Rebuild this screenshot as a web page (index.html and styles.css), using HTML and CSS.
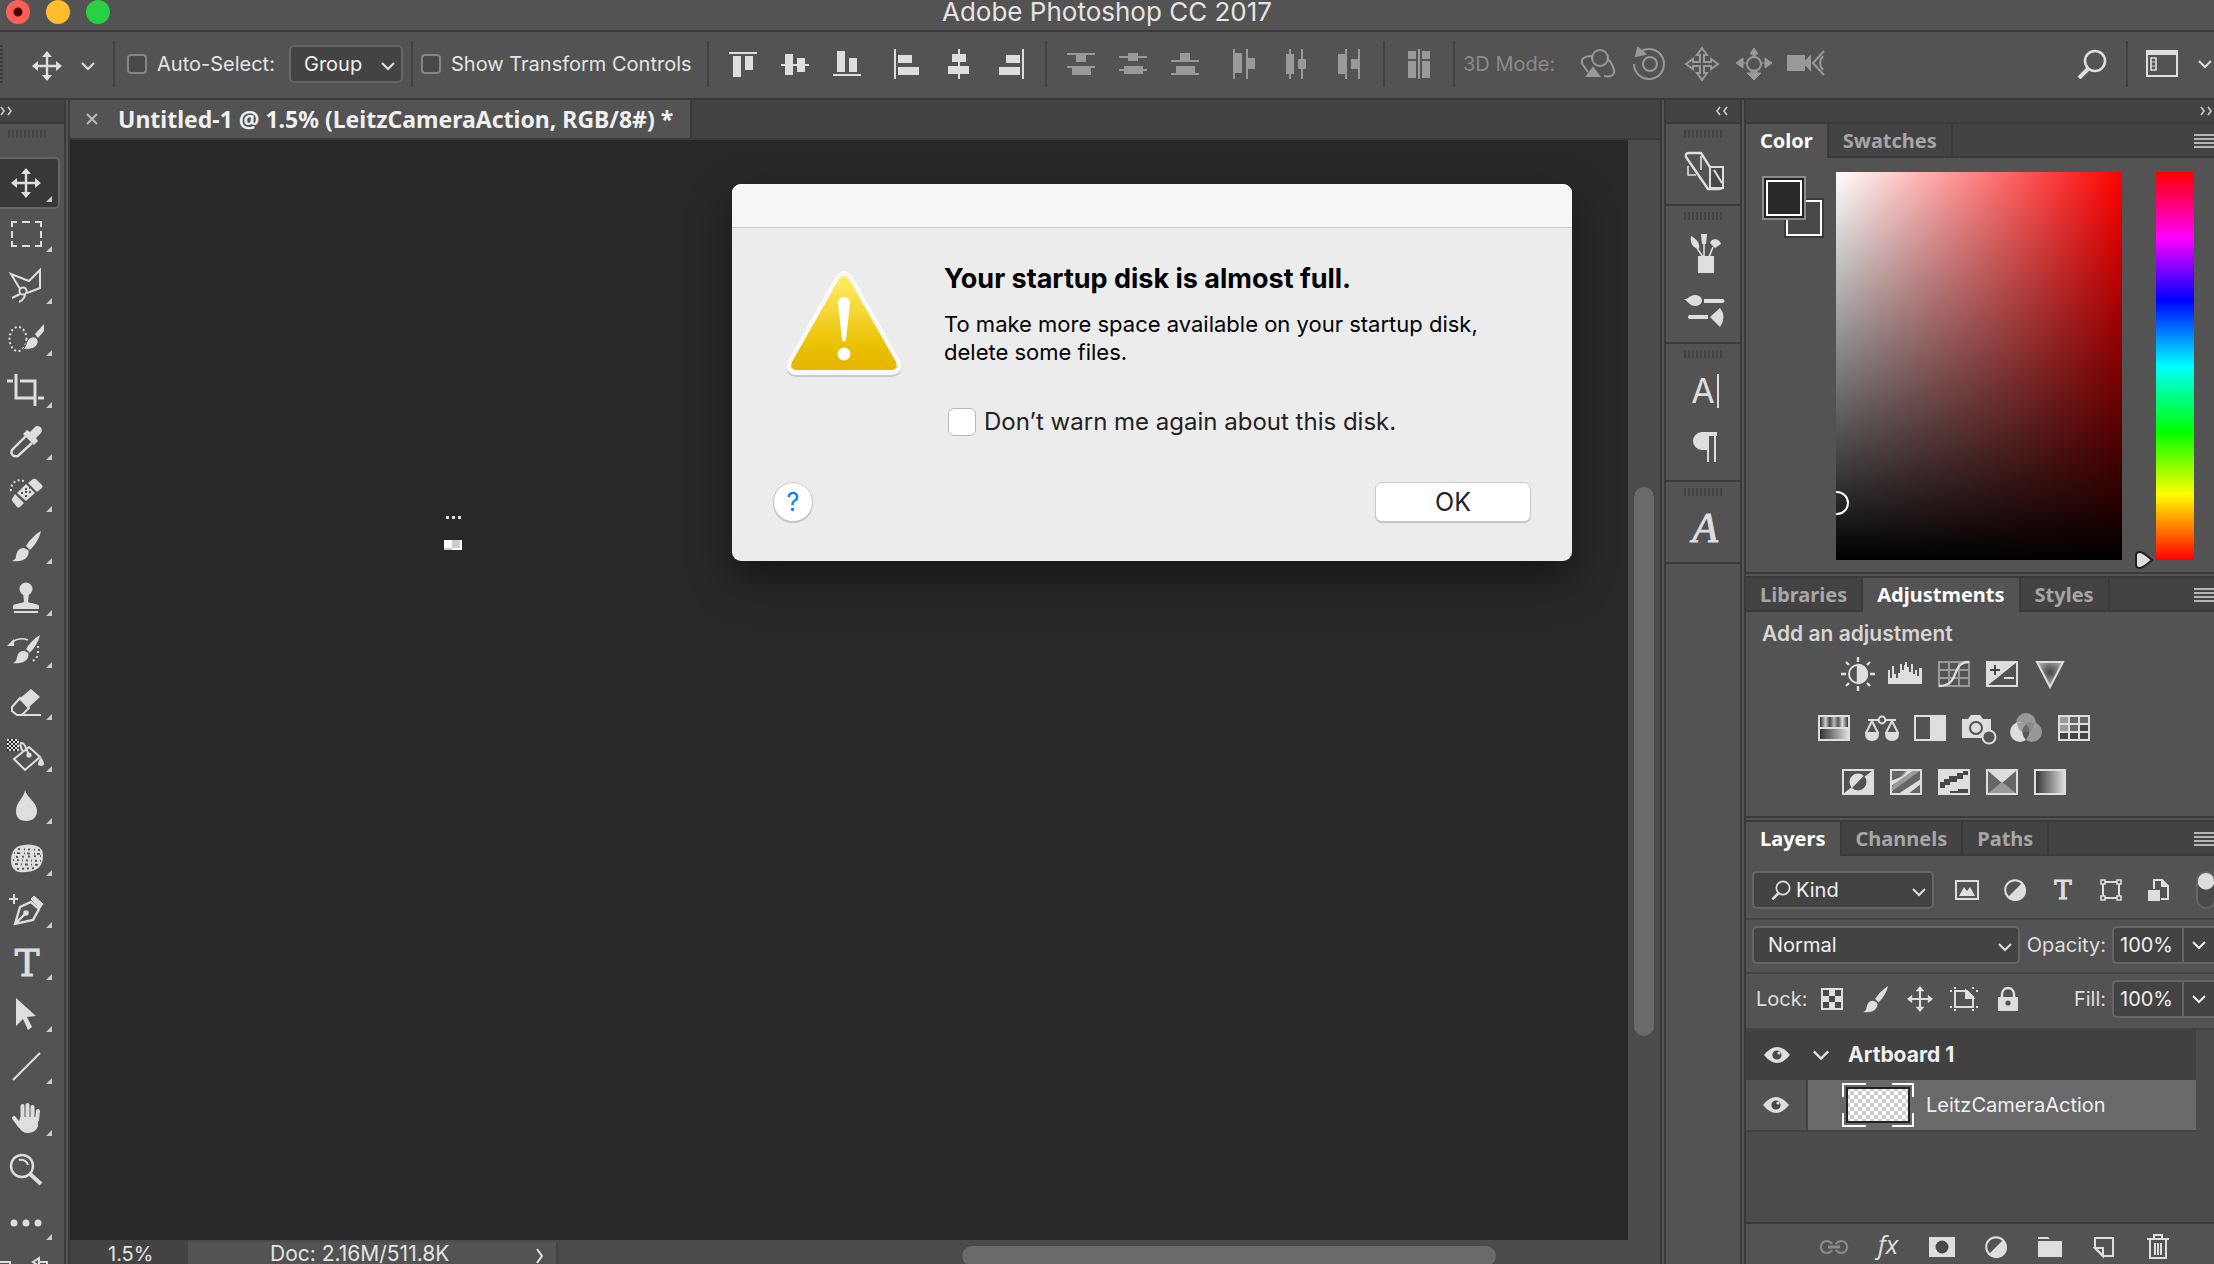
FILE: index.html
```html
<!DOCTYPE html>
<html lang="en">
  <head>
    <meta charset="UTF-8">
    <meta name="viewport" content="width=device-width, initial-scale=1.0">
    <title>Adobe Photoshop CC 2017</title>
    <link rel="stylesheet" href="styles.css">
  </head>
  <body>
    <!-- shared icons -->
    <svg class="sprite" aria-hidden="true">
      <symbol id="move" viewBox="0 0 30 30"><path d="M15 4v22M4 15h22" stroke="currentColor" stroke-width="2.4"/><path d="M15 0l5 6H10zM15 30l5-6H10zM0 15l6-5v10zM30 15l-6-5v10z" fill="currentColor"/></symbol>
      <symbol id="chevron" viewBox="0 0 14 10"><path d="M1 2l6 6 6-6" fill="none" stroke="currentColor" stroke-width="2"/></symbol>
      <symbol id="brush" viewBox="0 0 30 32"><path d="M29 1c-7 4-12 10-15 15l4 4C23 15 27 9 29 1z" fill="currentColor"/><path d="M12 18c-6 0-7 4-8 8 0 3-2 4-4 5 6 1 12 0 15-4 2-3 2-6 1-7z" fill="currentColor"/></symbol>
      <symbol id="search" viewBox="0 0 30 30"><circle cx="18" cy="12" r="10" fill="none" stroke="currentColor" stroke-width="2.6"/><path d="M11 20l-9 9" stroke="currentColor" stroke-width="4"/></symbol>
      <symbol id="eye" viewBox="0 0 26 16"><path d="M0 8Q13-8 26 8 13 24 0 8z" fill="currentColor"/><circle cx="13" cy="8" r="4.6" fill="#484848"/><circle cx="15" cy="6" r="1.6" fill="currentColor"/></symbol>
      <symbol id="halfcircle" viewBox="0 0 22 22"><circle cx="11" cy="11" r="9.8" fill="none" stroke="currentColor" stroke-width="2"/><path d="M18 4A10 10 0 1 1 4 18z" fill="currentColor"/></symbol>
      <symbol id="menu" viewBox="0 0 20 14"><path d="M0 1h20M0 5h20M0 9h20M0 13h20" stroke="currentColor" stroke-width="2"/></symbol>
    </svg>

    <header class="titlebar">
      <div class="lights">
        <button class="light red" aria-label="Close"></button>
        <button class="light yellow" aria-label="Minimize"></button>
        <button class="light green" aria-label="Zoom"></button>
      </div>
      <h1>Adobe Photoshop CC 2017</h1>
    </header>

    <div class="options">
      <span class="edge-grip"></span>
      <button class="opt wide" aria-label="Move tool"><svg width="30" height="30"><use href="#move"/></svg></button>
      <button class="opt small" aria-label="Tool presets"><svg width="14" height="10"><use href="#chevron"/></svg></button>
      <span class="sep"></span>
      <label class="check auto"><input type="checkbox"> Auto-Select:</label>
      <div class="select group">
        <select aria-label="Auto-select target"><option>Group</option></select>
        <svg width="14" height="10"><use href="#chevron"/></svg>
      </div>
      <span class="sep"></span>
      <label class="check transform"><input type="checkbox"> Show Transform Controls</label>
      <span class="sep"></span>
      <div class="opt-group">
        <button class="opt" aria-label="Align top edges"><svg width="30" height="30" fill="currentColor"><path d="M1 3h28v2H1zM5 7h8v21H5zM17 7h8v14h-8z"/></svg></button>
        <button class="opt" aria-label="Align vertical centers"><svg width="30" height="30" fill="currentColor"><path d="M1 15h28v2H1zM5 5h8v21H5zM17 9h8v14h-8z"/></svg></button>
        <button class="opt" aria-label="Align bottom edges"><svg width="30" height="30" fill="currentColor"><path d="M1 25h28v2H1zM5 2h8v21H5zM17 9h8v14h-8z"/></svg></button>
      </div>
      <div class="opt-group">
        <button class="opt" aria-label="Align left edges"><svg width="30" height="30" fill="currentColor"><path d="M2 0h2v30H2zM6 6h14v8H6zM6 18h21v8H6z"/></svg></button>
        <button class="opt" aria-label="Align horizontal centers"><svg width="30" height="30" fill="currentColor"><path d="M14 0h2v30h-2zM8 5h14v8H8zM4 17h21v8H4z"/></svg></button>
        <button class="opt" aria-label="Align right edges"><svg width="30" height="30" fill="currentColor"><path d="M26 0h2v30h-2zM10 6h14v8H10zM3 18h21v8H3z"/></svg></button>
      </div>
      <span class="sep"></span>
      <div class="opt-group off">
        <button class="opt" disabled aria-label="Distribute top edges"><svg width="30" height="30" fill="currentColor"><path d="M1 4h28v2H1zM10 6h10v7H10zM1 17h28v2H1zM6 19h19v7H6z"/></svg></button>
        <button class="opt" disabled aria-label="Distribute vertical centers"><svg width="30" height="30" fill="currentColor"><path d="M1 7h28v2H1zM10 4h10v8H10zM1 20h28v2H1zM6 17h19v8H6z"/></svg></button>
        <button class="opt" disabled aria-label="Distribute bottom edges"><svg width="30" height="30" fill="currentColor"><path d="M1 11h28v2H1zM10 4h10v7H10zM1 24h28v2H1zM6 17h19v7H6z"/></svg></button>
      </div>
      <div class="opt-group off">
        <button class="opt" disabled aria-label="Distribute left edges"><svg width="30" height="30" fill="currentColor"><path d="M3 0h2v30H3zM5 4h7v20H5zM16 0h2v30h-2zM18 9h7v11h-7z"/></svg></button>
        <button class="opt" disabled aria-label="Distribute horizontal centers"><svg width="30" height="30" fill="currentColor"><path d="M7 0h2v30H7zM4 5h8v20H4zM19 0h2v30h-2zM16 10h8v10h-8z"/></svg></button>
        <button class="opt" disabled aria-label="Distribute right edges"><svg width="30" height="30" fill="currentColor"><path d="M11 0h2v30h-2zM4 5h7v20H4zM24 0h2v30h-2zM17 10h7v10h-7z"/></svg></button>
      </div>
      <span class="sep"></span>
      <div class="opt-group off">
        <button class="opt" disabled aria-label="Auto-align layers"><svg width="30" height="30" fill="currentColor"><path d="M14 0h2v30h-2zM4 2h8v8H4zM4 12h8v17H4zM18 2h8v8h-8zM18 12h8v17h-8z"/></svg></button>
      </div>
      <span class="sep"></span>
      <span class="mode">3D Mode:</span>
      <div class="opt-group off">
        <button class="opt" disabled aria-label="Orbit"><svg width="36" height="32" fill="none" stroke="currentColor" stroke-width="2"><circle cx="20" cy="10" r="8"/><path d="M12 8C3 8 0 12 3 17l5 7M27 10c5 5 8 12 7 15-1 3-5 4-10 3"/><path d="M7 28l6-8 6 8z" fill="currentColor"/></svg></button>
        <button class="opt" disabled aria-label="Roll"><svg width="36" height="34" fill="none" stroke="currentColor" stroke-width="2"><circle cx="18" cy="17" r="7"/><path d="M8 5a15 15 0 1 1-6 12"/><path d="M4 9l2-8 7 6z" fill="currentColor"/></svg></button>
        <button class="opt" disabled aria-label="Pan"><svg width="34" height="34" fill="none" stroke="currentColor" stroke-width="2"><path d="M17 1l5 7h-3v7h7v-3l7 5-7 5v-3h-7v7h3l-5 7-5-7h3v-7H8v3l-7-5 7-5v3h7V8h-3z"/></svg></button>
        <button class="opt" disabled aria-label="Slide"><svg width="36" height="34" fill="none" stroke="currentColor" stroke-width="2"><circle cx="18" cy="17" r="7"/><path d="M18 1l4 6h-3v3h-2V7h-3zM0 16l7-5v10zM36 16l-7-5v10zM18 33l7-7h-4v-3h-6v3h-4zM7 16h4M25 16h4" fill="currentColor" stroke-width="1"/></svg></button>
        <button class="opt" disabled aria-label="Camera"><svg width="38" height="28" fill="none" stroke="currentColor" stroke-width="2"><path d="M1 6h16v14H1zM17 13l6-6v12z" fill="currentColor"/><path d="M37 1L26 13l11 12M36 6q-6 7 0 14"/></svg></button>
      </div>
      <span class="spacer"></span>
      <button class="opt" aria-label="Search"><svg width="30" height="30"><use href="#search"/></svg></button>
      <span class="sep"></span>
      <button class="opt" aria-label="Workspace"><svg width="32" height="28"><path d="M1 1h30v25H1z" fill="none" stroke="currentColor" stroke-width="2"/><path d="M1 1h30v4H1z" fill="currentColor"/><path d="M5 8h5v12H5z" fill="none" stroke="currentColor" stroke-width="1.6"/><path d="M5 12h5M5 16h5" stroke="currentColor"/></svg></button>
      <button class="opt tiny" aria-label="Workspace menu"><svg width="14" height="10"><use href="#chevron"/></svg></button>
    </div>

    <main class="workspace">
      <nav class="toolbar" aria-label="Tools">
        <div class="strip left"><svg width="13" height="10" fill="none" stroke="#ccc" stroke-width="1.6"><path d="M1 1l3 4-3 4M8 1l3 4-3 4"/></svg></div>
        <div class="grip"></div>
        <button class="tool active" aria-label="Move"><svg width="52" height="52"><use href="#move" x="11" y="11" width="30" height="30"/></svg></button>
        <button class="tool" aria-label="Marquee"><svg width="52" height="52" fill="none" stroke="currentColor" stroke-width="2"><path d="M12 18v-5h5M22 13h8M35 13h6v5M41 22v7M41 32v5h-6M30 37h-8M17 37h-5v-5M12 29v-7"/></svg></button>
        <button class="tool" aria-label="Lasso"><svg width="52" height="52" fill="none" stroke="currentColor" stroke-width="2"><path d="M20 28L11 13l18 7 11-11v18l-13 5M12 37l8-4M19 41c4-2 6-4 6-8"/><circle cx="23" cy="30" r="3.6"/></svg></button>
        <button class="tool" aria-label="Quick selection"><svg width="52" height="52"><ellipse cx="18" cy="26" rx="8.5" ry="12" fill="none" stroke="currentColor" stroke-width="2" stroke-dasharray="2 2.5"/><path d="M23 36c4-2 2-10 9-12 3-1 7 2 6 6-2 6-9 7-15 6z" fill="#dedede" stroke="#535353" stroke-width="1"/><path d="M35 21l9-10v7l-6 7z" fill="currentColor"/></svg></button>
        <button class="tool" aria-label="Crop"><svg width="52" height="52" fill="none" stroke="currentColor" stroke-width="3"><path d="M7 16h6M16 9v24h19M20 16h15v25M38 33h6"/></svg></button>
        <button class="tool" aria-label="Eyedropper"><svg width="52" height="52"><path d="M26 19L12 33c-2 5 2 7 6 6l14-13" fill="none" stroke="currentColor" stroke-width="2.4"/><path d="M23 17l4-4 3 2 5-5c4-3 9 2 6 6l-5 5 2 3-4 4z" fill="currentColor"/></svg></button>
        <button class="tool" aria-label="Healing brush"><svg width="52" height="52"><path d="M24 12c-8-3-14 3-13 11" fill="none" stroke="currentColor" stroke-width="2" stroke-dasharray="2 2.5"/><path d="M33 10q2-1 4 1l5 5q1 2 0 3l-5 4-9-9zM26 15l9 9-9 8-9-8zM15 25l9 9-4 4q-2 1-3 0l-4-5q-2-2-1-3z" fill="currentColor"/><path d="M21 24h2M25 20h2M25 27h2M29 23h2M25 23h2M29 19h1" stroke="#535353" stroke-width="2"/></svg></button>
        <button class="tool" aria-label="Brush"><svg width="52" height="52"><use href="#brush" x="12" y="9" width="30" height="32"/></svg></button>
        <button class="tool" aria-label="Clone stamp"><svg width="52" height="52" fill="currentColor"><circle cx="26" cy="16" r="6.5"/><path d="M23 20h6l-1 9c3 2 10 1 11 4v3H13v-3c1-3 8-2 11-4zM14 38h24v2H14z"/></svg></button>
        <button class="tool" aria-label="History brush"><svg width="52" height="52"><use href="#brush" x="13" y="9" width="28" height="30"/><path d="M7 21l7-7v7z" fill="currentColor"/><path d="M12 17c6-4 11-4 16-2" fill="none" stroke="currentColor" stroke-width="1.6"/><path d="M38 21v8c-1 4-3 6-7 8" fill="none" stroke="currentColor" stroke-width="2" stroke-dasharray="2 3"/></svg></button>
        <button class="tool" aria-label="Eraser"><svg width="52" height="52"><path d="M31 12l9 8-12 11-9-9z" fill="currentColor"/><path d="M20 21l-8 9v4l5 4h5l7-7zM17 38h24" fill="none" stroke="currentColor" stroke-width="2"/></svg></button>
        <button class="tool" aria-label="Paint bucket"><svg width="52" height="52" fill="none" stroke="currentColor" stroke-width="2"><path d="M14 30l15-12 11 10-15 13zM29 26c-2-4-4-12-7-12s-1 5 1 9"/><path d="M7 10h10v12H7z" fill="#222" stroke="none"/><path d="M7 11h10M9 13h10M7 15h10M9 17h10M7 19h10M9 21h10" stroke-dasharray="2 2"/><path d="M41 28q6 9 0 9t0-9z" fill="currentColor" stroke="none"/><circle cx="29" cy="26" r="1.6" fill="currentColor"/></svg></button>
        <button class="tool" aria-label="Blur"><svg width="52" height="52" fill="currentColor"><path d="M25 9c2 8 12 12 12 21 0 6-4 10-11 10s-10-4-10-10c0-9 8-13 9-21z"/></svg></button>
        <button class="tool" aria-label="Sponge"><svg width="52" height="52"><path d="M19 13q10-3 18 0 6 2 6 10 0 9-6 13-8 4-18 3-8-2-8-11 0-12 8-15z" fill="currentColor"/><g fill="none" stroke="#535353" stroke-width="1.8"><path d="M18 16l22 1" stroke-dasharray="2 4 1 3"/><path d="M14 20l28 1" stroke-dasharray="1 2 3 4"/><path d="M16 24l25-1" stroke-dasharray="2 4"/><path d="M13 27l29 1" stroke-dasharray="1 3 2 3"/><path d="M15 31l26 1" stroke-dasharray="3 3 1 3"/><path d="M17 36l20-1" stroke-dasharray="2 3"/></g></svg></button>
        <button class="tool" aria-label="Pen"><svg width="52" height="52" fill="none" stroke="currentColor" stroke-width="2.4"><path d="M9 14h9M14 9v10" stroke-width="2"/><path d="M15 39l5-17 11-5 8 7-6 11zM15 39l10-10"/><path d="M31 14l3-3 9 8-3 4z" fill="currentColor" stroke-width="1"/><circle cx="26" cy="28" r="1.6" fill="currentColor"/></svg></button>
        <button class="tool" aria-label="Type"><svg width="52" height="52"><text class="slab" x="27" y="39" font-size="37">T</text></svg></button>
        <button class="tool" aria-label="Path selection"><svg width="52" height="52" fill="currentColor"><path d="M16 9l20 18-9 1 5 10-4 3-5-11-7 7z"/></svg></button>
        <button class="tool" aria-label="Line"><svg width="52" height="52"><path d="M13 39l27-27" stroke="currentColor" stroke-width="2.2"/></svg></button>
        <button class="tool" aria-label="Hand"><svg width="52" height="52" fill="none" stroke="currentColor" stroke-width="4" stroke-linecap="round"><path d="M22.500 26V13M27.500 26V12M32.500 26V14M37 27l1-9M14 25l6 8"/><path d="M21 25h16v8q-2 6-9 6-6 0-9-7z" fill="currentColor" stroke-width="2"/></svg></button>
        <button class="tool plain" aria-label="Zoom"><svg width="52" height="52" fill="none" stroke="currentColor" stroke-width="2.4"><circle cx="22" cy="21" r="11"/><path d="M19 15c4-1 8 1 9 5" stroke-width="2"/><path d="M30 29l11 10" stroke-width="4"/></svg></button>
        <button class="tool" aria-label="Edit toolbar"><svg width="52" height="52" fill="currentColor"><circle cx="14" cy="26" r="3.500"/><circle cx="26" cy="26" r="3.500"/><circle cx="38" cy="26" r="3.500"/></svg></button>
        <svg class="swap" width="52" height="24" fill="none" stroke="#dedede" stroke-width="2"><path d="M-2 13h12v12h-12z"/><path d="M33 13l6-4v8zM38 13h9v8" /></svg>
      </nav>

      <section class="document">
        <div class="doc-tabs">
          <div class="doc-tab">
            <button class="close" aria-label="Close document"><svg width="12" height="12"><path d="M1 1l10 10M11 1L1 11" stroke="#bbb" stroke-width="2"/></svg></button>
            <span>Untitled-1 @ 1.5% (LeitzCameraAction, RGB/8#) *</span>
          </div>
        </div>
        <div class="view">
          <div class="canvas">
            <svg class="artboard" width="20" height="36"><path d="M2 2.500h3M8 2.500h3M14 2.500h3" stroke="#ddd" stroke-width="3"/><path d="M0 25h18v10H0z" fill="#fff"/><path d="M8 25h8v8H8zM0 33h8v2H0z" fill="#ccc"/></svg>
          </div>
          <div class="vscroll"><div class="vthumb"></div></div>
        </div>
        <div class="statusbar">
          <span class="zoom">1.5%</span>
          <div class="docsize"><span>Doc: 2.16M/511.8K</span><svg width="8" height="16" fill="none" stroke="currentColor" stroke-width="2"><path d="M1 1l5 7-5 7"/></svg></div>
          <div class="hscroll"><div class="hthumb"></div></div>
        </div>
      </section>

      <aside class="dock">
        <div class="strip center"><svg width="14" height="10" fill="none" stroke="#ccc" stroke-width="1.6"><path d="M5 1L2 5l3 4M12 1L9 5l3 4"/></svg></div>
        <div class="dock-group">
          <div class="grip"></div>
          <button aria-label="History"><svg width="44" height="44" fill="none" stroke="currentColor" stroke-width="2"><path d="M4 17v9h8M17 7v14" stroke-width="1.6"/><path d="M5 4h12l21 33q1 3-3 3H24L2 8q-1-4 3-4z" stroke-width="2.4"/><path d="M26 18h13v21H26z" fill="#484848"/><path d="M30 21l8 13"/></svg></button>
        </div>
        <div class="dock-group two">
          <div class="grip"></div>
          <button aria-label="Brush presets"><svg width="44" height="44" fill="currentColor"><path d="M14 25h16v17H14zM17 3h6l-1 10h-4zM7 5c7 4 9 8 8 13-6-1-9-5-8-13zM26 12c2-6 10-4 11 1l-6 4z"/><path d="M13 17l6 9M20 12v14M29 16l-4 10" stroke="currentColor" stroke-width="1.6"/></svg></button>
          <button aria-label="Brushes"><svg width="44" height="44" fill="currentColor"><path d="M0 12c4 1 6-5 12-4 8 1 8 10 0 11-7 0-8-5-12-7zM20 12h19q3 2 0 4H20zM5 28h19v4H5q-2-2 0-4zM26 30l10-9q7 9 0 19z"/></svg></button>
        </div>
        <div class="dock-group two">
          <div class="grip"></div>
          <button aria-label="Character"><svg width="44" height="44"><text class="sans" x="19" y="34" font-size="34">A</text><path d="M34 5v34" stroke="currentColor" stroke-width="2"/></svg></button>
          <button aria-label="Paragraph"><svg width="44" height="44"><path d="M18 8h14v2H18zM18 8a8 8 0 0 0 0 16h6V8zM24 8v29M31 8v29" fill="currentColor" stroke="currentColor" stroke-width="2"/></svg></button>
        </div>
        <div class="dock-group">
          <div class="grip"></div>
          <button aria-label="Glyphs"><svg width="44" height="44"><text class="italic" x="21" y="35" font-size="42">A</text></svg></button>
        </div>
      </aside>

      <aside class="panels">
        <div class="strip right"><svg width="14" height="10" fill="none" stroke="#ccc" stroke-width="1.6"><path d="M1 1l3 4-3 4M8 1l3 4-3 4"/></svg></div>

        <section class="panel">
          <div class="tabs">
            <button class="tab active">Color</button>
            <button class="tab">Swatches</button>
            <button class="menu" aria-label="Color menu"><svg width="20" height="14"><use href="#menu"/></svg></button>
          </div>
          <div class="color">
            <svg class="swatches" width="64" height="64" fill="none"><path d="M22 22h40v40H22z" fill="#3a3a3a"/><path d="M25 25h34v34H25z" fill="#484848" stroke="#fff" stroke-width="2"/><path d="M0 0h44v44H0z" fill="#8c8c8c"/><path d="M2 2h40v40H2z" fill="#222"/><path d="M5 5h34v34H5z" fill="#282828" stroke="#fff" stroke-width="2"/></svg>
            <div class="field"><span class="picker"></span></div>
            <input class="hue" type="range" min="0" max="360" value="0" aria-label="Hue">
          </div>
        </section>

        <section class="panel">
          <div class="tabs">
            <button class="tab">Libraries</button>
            <button class="tab active">Adjustments</button>
            <button class="tab">Styles</button>
            <button class="menu" aria-label="Adjustments menu"><svg width="20" height="14"><use href="#menu"/></svg></button>
          </div>
          <div class="adjustments">
            <h2>Add an adjustment</h2>
            <div class="adj-row">
              <button aria-label="Brightness/Contrast"><svg width="36" height="36" fill="none" stroke="currentColor" stroke-width="2.4"><circle cx="18" cy="18" r="9" stroke-width="2"/><path d="M18 9a9 9 0 0 1 0 18z" fill="currentColor"/><path d="M18 1v5M18 30v5M1 18h5M30 18h5M6 6l3 3M27 27l3 3M30 6l-3 3M9 27l-3 3"/></svg></button>
              <button aria-label="Levels"><svg width="36" height="36" fill="currentColor"><path d="M0 28V14h2v8h2V10h2v8h2v4h2v-5h2V8h2v6h2V9h1V6h2v5h2v5h2V8h2v10h2v-4h2v6h2v-8h3v16z"/></svg></button>
              <button aria-label="Curves"><svg width="36" height="36" fill="none"><path d="M3 6h30v24H3zM13 6v24M23 6v24M3 14h30M3 22h30" stroke="#999" stroke-width="2"/><path d="M3 30c22 0 11-24 30-24" stroke="currentColor" stroke-width="2.4"/></svg></button>
              <button aria-label="Exposure"><svg width="36" height="36"><path d="M3 6h30v24H3z" fill="#535353" stroke="currentColor" stroke-width="2"/><path d="M3 30V6h30z" fill="currentColor"/><path d="M6 14h10M11 9v10" stroke="#444" stroke-width="2"/><path d="M20 22h10" stroke="currentColor" stroke-width="2"/></svg></button>
              <button aria-label="Vibrance"><svg width="36" height="36"><defs><radialGradient id="vib" cy=".4" r=".45"><stop offset="0" stop-color="#444"/><stop offset="1" stop-color="#999"/></radialGradient></defs><path d="M5 6h26L18 31z" fill="url(#vib)" stroke="currentColor" stroke-width="2"/></svg></button>
            </div>
            <div class="adj-row">
              <button aria-label="Hue/Saturation"><svg width="36" height="36"><defs><linearGradient id="gr"><stop offset="0" stop-color="#333"/><stop offset="1" stop-color="#ddd"/></linearGradient><linearGradient id="bars"><stop offset="0" stop-color="#333"/><stop offset=".2" stop-color="#ccc"/><stop offset=".35" stop-color="#444"/><stop offset=".5" stop-color="#bbb"/><stop offset=".65" stop-color="#555"/><stop offset=".8" stop-color="#ddd"/><stop offset="1" stop-color="#333"/></linearGradient></defs><path d="M2 5h32v26H2z" fill="currentColor"/><path d="M4 7h28v10H4z" fill="url(#bars)"/><path d="M4 19h28v10H4z" fill="url(#gr)"/></svg></button>
              <button aria-label="Color balance"><svg width="36" height="36" fill="none" stroke="currentColor" stroke-width="2"><path d="M4 10h28M8 11L2 23M8 11l6 12M28 11l-6 12M28 11l6 12" /><circle cx="18" cy="10" r="3.400" fill="#535353"/><path d="M2 23h12q0 7-6 7t-6-7zM22 23h12q0 7-6 7t-6-7z" fill="currentColor"/></svg></button>
              <button aria-label="Black and white"><svg width="36" height="36"><path d="M3 6h30v24H3z" fill="none" stroke="currentColor" stroke-width="2"/><path d="M18 6h15v24H18z" fill="currentColor"/></svg></button>
              <button aria-label="Photo filter"><svg width="36" height="36"><path d="M2 9h6l3-4h9l3 4h8v19H2z" fill="currentColor"/><circle cx="16" cy="18" r="6" fill="currentColor" stroke="#535353" stroke-width="2"/><circle cx="29" cy="27" r="6.500" fill="#535353" stroke="currentColor" stroke-width="2"/></svg></button>
              <button aria-label="Channel mixer"><svg width="36" height="36"><circle cx="18" cy="13" r="10" fill="#999"/><circle cx="12" cy="22" r="10" fill="#dedede"/><circle cx="24" cy="22" r="10" fill="#aaa" fill-opacity=".8"/><path d="M18 14q7 7 0 16-7-9 0-16z" fill="#555"/><path d="M9 13q9-2 9 2 0-4 9-2-1 7-5 9h-8q-4-2-5-9z" fill="#777" opacity=".6"/></svg></button>
              <button aria-label="Color lookup"><svg width="36" height="36"><path d="M2 5h32v26H2z" fill="currentColor"/><path d="M4 7h8v6H4zM4 15h8v6H4z" fill="#999"/><path d="M14 7h8v6h-8zM24 7h8v6h-8zM14 15h8v6h-8z" fill="#666"/><path d="M24 15h8v6h-8zM4 23h8v6H4zM14 23h8v6h-8zM24 23h8v6h-8z" fill="#444"/></svg></button>
            </div>
            <div class="adj-row">
              <button aria-label="Invert"><svg width="36" height="36"><path d="M3 6h30v24H3z" fill="#535353" stroke="currentColor" stroke-width="2"/><path d="M33 6v24H3z" fill="currentColor"/><path d="M24 12A8 8 0 0 0 12 24z" fill="currentColor"/><path d="M24 12A8 8 0 0 1 12 24z" fill="#535353"/></svg></button>
              <button aria-label="Posterize"><svg width="36" height="36"><path d="M3 6h30v24H3z" fill="#666"/><path d="M3 24L18 6h15L3 28z" fill="#999"/><path d="M3 17l12-5 5-6h6L3 22zM10 30l23-15v5L20 30z" fill="#dedede"/><path d="M3 6h30v24H3z" fill="none" stroke="currentColor" stroke-width="2"/></svg></button>
              <button aria-label="Threshold"><svg width="36" height="36"><path d="M2 5h32v26H2z" fill="currentColor"/><path d="M4 24v-6h4v-3h5v-3h8v-3h6V7h5v4h-5v4h-6v3h-7v3H9v3zM14 29v-2h8v-2h10v4z" fill="#484848"/></svg></button>
              <button aria-label="Selective color"><svg width="36" height="36"><path d="M3 6h30v24H3z" fill="#666"/><path d="M3 6h30L18 19z" fill="#dedede"/><path d="M3 30h30L18 18z" fill="#999"/><path d="M3 6h30v24H3z" fill="none" stroke="currentColor" stroke-width="2"/></svg></button>
              <button aria-label="Gradient map"><svg width="36" height="36"><path d="M3 6h30v24H3z" fill="url(#gr)" stroke="currentColor" stroke-width="2"/></svg></button>
            </div>
          </div>
        </section>

        <section class="panel layers">
          <div class="tabs">
            <button class="tab active">Layers</button>
            <button class="tab">Channels</button>
            <button class="tab">Paths</button>
            <button class="menu" aria-label="Layers menu"><svg width="20" height="14"><use href="#menu"/></svg></button>
          </div>
          <div class="layer-row">
            <div class="select kind">
              <svg class="lens" width="20" height="20"><use href="#search"/></svg>
              <select aria-label="Filter type"><option>Kind</option></select>
              <svg width="14" height="10"><use href="#chevron"/></svg>
            </div>
            <div class="filters">
              <button aria-label="Pixel layers"><svg width="24" height="22"><path d="M1 2h22v18H1z" fill="none" stroke="currentColor" stroke-width="2"/><path d="M4 17l5-9 3 4 3-4 5 9z" fill="currentColor"/></svg></button>
              <button aria-label="Adjustment layers"><svg width="22" height="22"><use href="#halfcircle"/></svg></button>
              <button aria-label="Type layers"><svg width="24" height="24"><text class="slab" x="12" y="21" font-size="26">T</text></svg></button>
              <button aria-label="Shape layers"><svg width="24" height="24" fill="none" stroke="currentColor" stroke-width="2"><path d="M4 4h16v16H4z"/><path d="M2 2h4v4H2zM18 2h4v4h-4zM2 18h4v4H2zM18 18h4v4h-4z" fill="#535353" stroke-width="1.6"/></svg></button>
              <button aria-label="Smart objects"><svg width="24" height="26"><path d="M7 12V3h8l6 6v13h-7" fill="none" stroke="currentColor" stroke-width="2"/><path d="M14 3v7h7M1 13h12v11H1z" fill="currentColor"/></svg></button>
            </div>
            <span class="toggle"></span>
          </div>
          <div class="layer-row">
            <div class="select blend">
              <select aria-label="Blend mode"><option>Normal</option></select>
              <svg width="14" height="10"><use href="#chevron"/></svg>
            </div>
            <label class="value" for="opacity">Opacity:</label>
            <div class="number"><input id="opacity" type="text" value="100%"><button aria-label="Opacity slider"><svg width="14" height="10"><use href="#chevron"/></svg></button></div>
          </div>
          <div class="layer-row last">
            <span class="lock">Lock:</span>
            <div class="locks">
              <button aria-label="Lock transparent pixels"><svg width="22" height="22"><path d="M0 0h22v22H0z" fill="currentColor"/><path d="M2 2h6v6H2zM14 2h6v6h-6zM8 8h6v6H8zM2 14h6v6H2zM14 14h6v6h-6z" fill="#484848"/></svg></button>
              <button aria-label="Lock image pixels"><svg width="26" height="28"><use href="#brush"/></svg></button>
              <button aria-label="Lock position"><svg width="26" height="26"><use href="#move"/></svg></button>
              <button aria-label="Lock artboard"><svg width="28" height="24" fill="none" stroke="currentColor" stroke-width="2"><path d="M5 4h12l6 6v10H5zM0 4h2M0 20h2M26 4h2M26 20h2M4 1h2M22 1h2M4 23h2M22 23h2"/><path d="M16 4v7h7z" fill="currentColor"/></svg></button>
              <button aria-label="Lock all"><svg width="22" height="24"><path d="M5 11V7a6 6 0 0 1 12 0v4" fill="none" stroke="currentColor" stroke-width="2.4"/><path d="M1 10h20v14H1z" fill="currentColor"/><circle cx="11" cy="16" r="2.600" fill="#535353"/></svg></button>
            </div>
            <label class="value" for="fill">Fill:</label>
            <div class="number"><input id="fill" type="text" value="100%"><button aria-label="Fill slider"><svg width="14" height="10"><use href="#chevron"/></svg></button></div>
          </div>
          <div class="layer-list">
            <ul>
              <li class="artboard-row">
                <button class="eye" aria-label="Hide Artboard 1"><svg width="26" height="16"><use href="#eye"/></svg></button>
                <button class="fold" aria-label="Collapse Artboard 1"><svg width="18" height="12"><use href="#chevron"/></svg></button>
                <strong>Artboard 1</strong>
              </li>
              <li class="selected">
                <button class="eye" aria-label="Hide LeitzCameraAction"><svg width="26" height="16"><use href="#eye"/></svg></button>
                <div class="layer">
                  <svg width="72" height="44"><defs><pattern id="checker" width="8" height="8" patternUnits="userSpaceOnUse"><path d="M0 0h8v8H0z" fill="#fff"/><path d="M0 0h4v4H0zM4 4h4v4H4z" fill="#ccc"/></pattern></defs><path d="M1 14V1h23M50 1h21v13M71 30v13H50M24 43H1V30" fill="none" stroke="#fff" stroke-width="2"/><path d="M5 5h62v34H5z" fill="url(#checker)" stroke="#222" stroke-width="2"/></svg>
                  <span>LeitzCameraAction</span>
                </div>
              </li>
            </ul>
          </div>
          <footer class="layer-footer">
            <button class="dim" aria-label="Link layers"><svg width="30" height="16" fill="none" stroke="currentColor" stroke-width="2.2"><path d="M13 5a6 6 0 1 0 0 6M17 5a6 6 0 1 1 0 6"/><path d="M9 8h12" stroke-width="3"/></svg></button>
            <button aria-label="Layer style"><svg width="30" height="24"><text class="fx" x="15" y="19" font-size="26">fx</text></svg></button>
            <button aria-label="Add mask"><svg width="26" height="20"><path d="M0 0h26v20H0z" fill="currentColor"/><circle cx="13" cy="10" r="6.500" fill="#484848"/></svg></button>
            <button aria-label="New adjustment layer"><svg width="22" height="22"><use href="#halfcircle"/></svg></button>
            <button aria-label="New group"><svg width="26" height="22" fill="currentColor"><path d="M1 1h10l2 2H1zM1 5h24v16H1z"/></svg></button>
            <button aria-label="New layer"><svg width="22" height="22"><path d="M2 2h18v18H10l-8-8z" fill="none" stroke="currentColor" stroke-width="2"/><path d="M2 12h8v8z" fill="none" stroke="currentColor" stroke-width="2"/></svg></button>
            <button aria-label="Delete layer"><svg width="24" height="26" fill="none" stroke="currentColor" stroke-width="2"><path d="M1 5h22M8 4V1h8v3M4 6v18h16V6M9 9v12M12 9v12M15 9v12"/></svg></button>
          </footer>
        </section>
      </aside>
    </main>

    <div class="alert" role="alertdialog" aria-labelledby="alert-title">
      <div class="alert-bar"></div>
      <div class="alert-body">
        <svg class="warning" width="120" height="112">
          <defs><linearGradient id="warn" x2="0" y2="1"><stop offset="0" stop-color="#ffee6a"/><stop offset=".75" stop-color="#eac000"/><stop offset="1" stop-color="#e6b400"/></linearGradient></defs>
          <path d="M51 9q9-12 18 0l47 84q5 14-9 15H13q-14-1-9-15z" fill="#bbb" opacity=".7"/>
          <path d="M51 8q9-12 18 0l47 83q5 14-9 15H13q-14-1-9-15z" fill="#fafafa"/>
          <path d="M55 10q5-7 10 0l47 83q3 8-5 8H13q-8 0-5-8z" fill="url(#warn)"/>
          <path d="M54 34q0-6 6-6t6 6l-4 37q-2 3-4 0z" fill="#fff"/><circle cx="60" cy="85" r="6.500" fill="#fff"/>
        </svg>
        <div class="alert-text">
          <h2 id="alert-title">Your startup disk is almost full.</h2>
          <p>To make more space available on your startup disk,<br>delete some files.</p>
          <label><input type="checkbox"> Don’t warn me again about this disk.</label>
        </div>
      </div>
      <div class="alert-actions">
        <button class="help" aria-label="Help">?</button>
        <button class="ok">OK</button>
      </div>
    </div>
  </body>
</html>
```
FILE: styles.css
```css
* {
    box-sizing: border-box;
}

body {
    margin: 0;
    height: 100vh;
    overflow: hidden;
    display: flex;
    flex-direction: column;
    font-family: Inter, "Liberation Sans", sans-serif;
    font-size: 20px;
    color: #e4e4e4;
    background-color: #535353;
}

button, select, input {
    font: inherit;
    color: inherit;
    margin: 0;
    padding: 0;
    border: 0;
    background: none;
}

button {
    display: flex;
    align-items: center;
    justify-content: center;
}

svg {
    display: block;
    flex-shrink: 0;
    overflow: visible;
}

.sprite {
    position: absolute;
    width: 0;
    height: 0;
}

h1, h2, p, ul {
    margin: 0;
    padding: 0;
}

text {
    fill: currentColor;
    text-anchor: middle;
}

.slab {
    font-family: "DejaVu Serif", serif;
    stroke: currentColor;
    stroke-width: 1px;
}

.sans {
    font-family: Inter, sans-serif;
}

.italic {
    font-family: "Liberation Serif", serif;
    font-style: italic;
    stroke: currentColor;
    stroke-width: 1px;
}

.fx {
    font-family: "Open Sans", sans-serif;
    font-style: italic;
}

/* title bar */
.titlebar {
    display: grid;
    grid-template-columns: 1fr auto 1fr;
    align-items: center;
    height: 32px;
    padding: 0 6px 8px;
    border-bottom: 2px solid #3a3a3a;
}

.titlebar h1 {
    font-size: 26px;
    font-weight: 400;
    line-height: 22px;
}

.lights {
    display: flex;
    gap: 16px;
}

.light {
    width: 24px;
    height: 24px;
    border-radius: 50%;
}

.red {
    background: radial-gradient(circle, #4d0000 0 4px, #ff5f57 5px);
}

.yellow {
    background-color: #ffbd2e;
}

.green {
    background-color: #28cf42;
}

/* options bar */
.options {
    display: flex;
    align-items: center;
    height: 68px;
    flex-shrink: 0;
    padding-bottom: 2px;
    border-bottom: 2px solid #3a3a3a;
}

.edge-grip {
    width: 3px;
    height: 38px;
    background: repeating-linear-gradient(#3a3a3a 0 2px, transparent 2px 4px);
}

.opt {
    width: 52px;
    height: 52px;
    color: #dedede;
}

.opt.wide {
    width: 78px;
    padding-left: 10px;
}

.opt.wide svg, .opt.small svg {
    margin-top: 4px;
}

.opt.small {
    width: 14px;
    margin-right: -2px;
}

.opt.tiny {
    width: 26px;
    padding-left: 8px;
}

.opt.small + .sep {
    margin-left: 20px;
}

.opt-group {
    display: flex;
}

.opt-group + .opt-group {
    margin-left: 8px;
}

.off, .off .opt {
    color: #999;
}

.sep {
    width: 2px;
    height: 46px;
    margin: 0 8px;
    background-color: #424242;
}

.spacer {
    flex: 1;
}

.check {
    display: flex;
    align-items: center;
    gap: 10px;
    white-space: nowrap;
}

.check input {
    appearance: none;
    flex-shrink: 0;
    width: 20px;
    height: 20px;
    border: 2px solid #858585;
    border-radius: 4px;
    background-color: #484848;
}

.auto {
    width: 162px;
    margin-left: 4px;
}

.transform {
    width: 278px;
}

.mode {
    width: 109px;
    color: #8a8a8a;
}

.select {
    position: relative;
    height: 38px;
    flex-shrink: 0;
    border: 2px solid #666;
    border-radius: 5px;
    background-color: #434343;
}

.select select {
    appearance: none;
    width: 100%;
    height: 100%;
    padding: 0 13px;
    color: #f0f0f0;
}

.select svg {
    position: absolute;
    right: 6px;
    top: 14px;
    pointer-events: none;
}

.group {
    width: 114px;
}

/* workspace */
.workspace {
    flex: 1;
    min-height: 0;
    display: flex;
}

.strip {
    display: flex;
    align-items: center;
    height: 24px;
    flex-shrink: 0;
    background-color: #434343;
    border-bottom: 2px solid #3a3a3a;
}

.strip.center {
    justify-content: center;
    padding-left: 38px;
}

.strip.right {
    justify-content: flex-end;
}

.grip {
    width: 38px;
    height: 8px;
    background: repeating-linear-gradient(to right, #434343 0 2px, transparent 2px 4px);
}

.toolbar {
    width: 70px;
    flex-shrink: 0;
    border-right: 6px double #3a3a3a;
    overflow: hidden;
}

.toolbar .grip {
    margin: 6px 8px 19px;
}

.tool {
    position: relative;
    width: 60px;
    height: 52px;
    justify-content: flex-start;
    color: #dedede;
}

.tool::after {
    content: "";
    position: absolute;
    left: 46px;
    top: 37px;
    border: 3px solid transparent;
    border-right-color: #ccc;
    border-bottom-color: #ccc;
}

.tool.plain::after {
    display: none;
}

.tool.active {
    background-color: #383838;
    border: 2px solid #666;
    border-left: 0;
    border-radius: 0 5px 5px 0;
}

.document {
    flex: 1;
    min-width: 0;
    display: flex;
    flex-direction: column;
}

.doc-tabs {
    display: flex;
    height: 40px;
    background-color: #434343;
    border-bottom: 2px solid #3a3a3a;
}

.doc-tab {
    display: flex;
    align-items: center;
    gap: 20px;
    padding: 0 17px 0 16px;
    background-color: #535353;
    border-right: 2px solid #3a3a3a;
    font-family: "Noto Sans", sans-serif;
    font-size: 23px;
    font-weight: 700;
    color: #f0f0f0;
    white-space: nowrap;
}

.view {
    flex: 1;
    display: flex;
}

.canvas {
    flex: 1;
    background-color: #282828;
    padding: 375px 374px;
}

.vscroll {
    width: 32px;
    padding: 347px 6px 0;
    background-color: #4b4b4b;
}

.vthumb {
    height: 549px;
    border-radius: 10px;
    background-color: #696969;
}

.statusbar {
    display: flex;
    height: 24px;
    line-height: 20px;
    background-color: #4b4b4b;
}

.zoom {
    width: 118px;
    padding: 4px 0 0 38px;
    background-color: #434343;
}

.docsize {
    display: flex;
    align-items: flex-end;
    justify-content: space-between;
    width: 370px;
    margin-top: 2px;
    padding: 0 12px 0 82px;
    font-size: 21px;
    background-color: #535353;
    border-right: 2px solid #434343;
}

.hscroll {
    flex: 1;
    padding: 6px 164px 0 404px;
    overflow: hidden;
}

.hthumb {
    height: 20px;
    border-radius: 10px;
    background-color: #696969;
}

/* collapsed icon dock */
.dock {
    width: 86px;
    flex-shrink: 0;
    border: solid #3a3a3a;
    border-width: 0 6px;
    border-style: double;
}

.dock-group {
    display: flex;
    flex-direction: column;
    align-items: center;
    height: 82px;
    padding-top: 6px;
    border-bottom: 2px solid #3a3a3a;
}

.dock-group.two {
    height: 138px;
}

.dock-group button {
    width: 74px;
    height: 56px;
    margin-top: 5px;
    padding-left: 6px;
    color: #dedede;
}

.dock-group button + button {
    margin-top: 0;
}

/* right panels */
.panels {
    width: 468px;
    flex-shrink: 0;
    display: flex;
    flex-direction: column;
}

.panel {
    border-bottom: 6px double #3a3a3a;
}

.tabs {
    display: flex;
    height: 34px;
    background-color: #434343;
    font-family: "Noto Sans", sans-serif;
    box-shadow: inset 0 -2px #3a3a3a;
}

.tab {
    padding: 0 14px 2px;
    border-right: 2px solid #3a3a3a;
    font-size: 20px;
    font-weight: 700;
    color: #a6a6a6;
}

.tab.active {
    background-color: #535353;
    color: #fff;
}

.menu {
    margin-left: auto;
    color: #b4b4b4;
}

.color {
    display: flex;
    align-items: flex-start;
    padding: 14px 20px 12px 16px;
}

.swatches {
    margin: 4px 10px 0 0;
}

.field {
    flex: 1;
    height: 388px;
    overflow: hidden;
    background: linear-gradient(to top, #000, transparent), linear-gradient(to right, #fff, #f00);
}

.picker {
    display: block;
    width: 24px;
    height: 24px;
    margin: 319px 0 0 -11px;
    border: 2px solid #fff;
    border-radius: 50%;
}

/* vertical slider, the pointer sits left of the ramp */
.hue {
    appearance: none;
    writing-mode: vertical-lr;
    direction: rtl;
    width: 60px;
    height: 406px;
    margin: -9px 0 -9px 12px;
    background: linear-gradient(#f00, #f0f 17%, #00f 33%, #0ff 50%, #0f0 67%, #ff0 83%, #f00) right center / 38px 388px no-repeat;
}

.hue::-webkit-slider-thumb {
    appearance: none;
    width: 18px;
    height: 18px;
    margin-right: 40px;
    background: url('data:image/svg+xml,<svg xmlns="http://www.w3.org/2000/svg" width="18" height="18"><path d="M1 4q0-3 4-3 3 0 12 8-9 8-12 8-4 0-4-3z" fill="%23dedede" stroke="%23222" stroke-width="2"/></svg>') no-repeat;
}

.adjustments {
    height: 204px;
    padding-top: 9px;
}

.adjustments h2 {
    padding-left: 16px;
    font-size: 21px;
    line-height: 26px;
    font-weight: 600;
    color: #d6d6d6;
}

.adj-row {
    display: flex;
    justify-content: center;
    height: 54px;
    padding-right: 52px;
}

.adj-row button {
    width: 48px;
    color: #dedede;
}

/* layers */
.layers {
    flex: 1;
    display: flex;
    flex-direction: column;
    border-bottom: 0;
    color: #dedede;
}

.layer-row {
    display: flex;
    align-items: center;
    height: 54px;
    padding: 0 0 2px 6px;
    border-bottom: 2px solid #434343;
}

.tabs + .layer-row {
    height: 64px;
    padding-top: 8px;
}

.layer-row.last {
    height: 56px;
    padding-bottom: 4px;
}

.kind {
    width: 182px;
}

.kind select {
    padding-left: 42px;
}

.kind .lens {
    left: 17px;
    top: 7px;
}

.blend {
    width: 268px;
}

.blend select {
    padding-left: 14px;
}

.filters {
    display: flex;
    flex-shrink: 0;
    margin-left: 9px;
}

.filters button {
    width: 48px;
    height: 40px;
}

/* runs under the right edge of the window */
.toggle {
    width: 20px;
    height: 38px;
    flex-shrink: 0;
    margin-left: 13px;
    border: 2px solid #666;
    border-radius: 10px;
    background: radial-gradient(circle at 8px 8px, #dedede 8px, #484848 9px);
}

.value {
    flex: 1;
    padding-right: 6px;
    text-align: right;
}

.number {
    display: flex;
    width: 102px;
    height: 38px;
    border: 2px solid #666;
    border-right: 0;
    border-radius: 5px 0 0 5px;
    background-color: #434343;
    color: #f0f0f0;
}

.number input {
    width: 70px;
    padding-left: 6px;
    border-right: 2px solid #666;
}

.number button {
    flex: 1;
}

.lock {
    width: 58px;
    padding-left: 4px;
}

.locks {
    display: flex;
}

.locks button {
    width: 44px;
    height: 40px;
}

.layer-list {
    flex: 1;
    padding-right: 18px;
    background-color: #4b4b4b;
}

.layer-list ul {
    list-style: none;
    border-bottom: 2px solid #434343;
}

.layer-list li {
    display: flex;
    align-items: stretch;
    height: 50px;
}

.artboard-row {
    background-color: #414141;
    line-height: 50px;
}

.artboard-row strong {
    padding-left: 12px;
    font-weight: 700;
    font-size: 21px;
    color: #f0f0f0;
}

.eye {
    width: 62px;
}

.fold {
    width: 28px;
    padding-right: 2px;
}

.selected .eye {
    background-color: #535353;
    border-right: 2px solid #434343;
}

.layer {
    flex: 1;
    display: flex;
    align-items: center;
    gap: 12px;
    padding-left: 34px;
    background-color: #696969;
    color: #f0f0f0;
}

.layer-footer {
    display: flex;
    align-items: center;
    height: 42px;
    padding: 5px 0 0 61px;
    border-top: 2px solid #3a3a3a;
}

.layer-footer button {
    width: 54px;
    height: 34px;
}

.layer-footer .dim {
    color: #8a8a8a;
}

/* system alert over the window */
.alert {
    position: absolute;
    left: 732px;
    top: 184px;
    width: 840px;
    border-radius: 9px;
    background-color: #ececec;
    color: #000;
    box-shadow: 0 18px 44px rgba(0, 0, 0, 0.45);
    overflow: hidden;
}

.alert-bar {
    height: 44px;
    background-color: #f6f6f6;
    border-bottom: 1px solid #cfcfcf;
}

.alert-body {
    display: flex;
    gap: 40px;
    padding: 35px 52px 0;
}

.warning {
    margin-top: 6px;
}

.alert-text h2 {
    font-size: 27px;
    line-height: 32px;
    font-weight: 700;
}

.alert-text p {
    margin-top: 15px;
    font-size: 22px;
    line-height: 28px;
}

.alert-text label {
    display: flex;
    align-items: center;
    gap: 8px;
    margin: 40px 0 0 4px;
    font-size: 24px;
    line-height: 32px;
    color: #222;
}

.alert-text input {
    appearance: none;
    width: 28px;
    height: 28px;
    border: 1px solid #b8b8b8;
    border-radius: 6px;
    background-color: #fff;
}

.alert-actions {
    display: flex;
    justify-content: space-between;
    padding: 44px 41px 39px;
}

.alert-actions button {
    height: 40px;
    background-color: #fff;
    border: 1px solid #ccc;
    box-shadow: 0 1px 1px rgba(0, 0, 0, 0.2);
    font-size: 25px;
}

.alert-actions .help {
    width: 40px;
    border-radius: 50%;
    color: #0a7aff;
}

.alert-actions .ok {
    width: 156px;
    border-radius: 7px;
    color: #222;
}
```
